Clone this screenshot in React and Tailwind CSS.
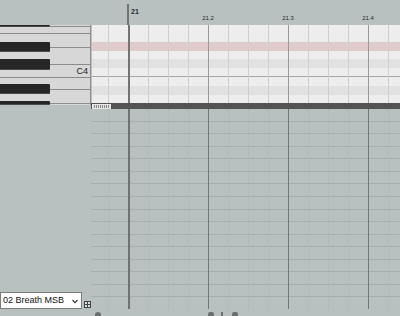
import React from "react";

function BlackRow({ h }) {
  return (
    <div className={`flex shrink-0 ${h}`}>
      <div className="w-[50px] bg-[#262626] border-b border-[#4a4a4a] rounded-r-[1px]" />
      <div className="flex-1 flex flex-col justify-center">
        <div className="h-px bg-[#8c8c8c]" />
      </div>
    </div>
  );
}

const gridCols = [
  "border-l border-[#cfcfcf]",
  "border-l-2 border-[#727474]",
  "border-l border-[#cfcfcf]",
  "border-l border-[#cfcfcf]",
  "border-l border-[#cfcfcf]",
  "border-l border-[#9a9a9a]",
  "border-l border-[#cfcfcf]",
  "border-l border-[#cfcfcf]",
  "border-l border-[#cfcfcf]",
  "border-l border-[#9a9a9a]",
  "border-l border-[#cfcfcf]",
  "border-l border-[#cfcfcf]",
  "border-l border-[#cfcfcf]",
  "border-l border-[#9a9a9a]",
  "border-l border-[#cfcfcf]",
];

const laneCols = [
  "border-l border-dotted border-[#adb5b5]",
  "border-l-2 border-[#6e7474]",
  "border-l border-dotted border-[#adb5b5]",
  "border-l border-dotted border-[#adb5b5]",
  "border-l border-dotted border-[#adb5b5]",
  "border-l border-[#737979]",
  "border-l border-dotted border-[#adb5b5]",
  "border-l border-dotted border-[#adb5b5]",
  "border-l border-dotted border-[#adb5b5]",
  "border-l border-[#737979]",
  "border-l border-dotted border-[#adb5b5]",
  "border-l border-dotted border-[#adb5b5]",
  "border-l border-dotted border-[#adb5b5]",
  "border-l border-[#737979]",
  "border-l border-dotted border-[#adb5b5]",
];

const noteRows = [
  "bg-[#ededed]",
  "bg-[#ededed]",
  "bg-[#dfcbcb]",
  "bg-[#ededed]",
  "bg-[#e1e1e1]",
  "bg-[#ededed] border-b border-[#a8a8a8]",
  "bg-[#ededed]",
  "bg-[#e1e1e1]",
  "bg-[#ededed]",
];

export default function App() {
  const laneRows = Array.from({ length: 16 }, (_, i) => i);
  return (
    <div className="w-[400px] h-[316px] bg-[#b9c1c0] flex flex-col overflow-hidden font-['Liberation_Sans',Arial,sans-serif] text-[#2a2a2a]">
      {/* ruler */}
      <div className="h-[25px] shrink-0 flex">
        <div className="w-[127px] shrink-0" />
        <div className="flex pt-[4px]">
          <div className="w-[81px] shrink-0 border-l-2 border-[#727474] pl-[2px]">
            <div className="text-[7px] font-bold leading-none mt-[4px]">21</div>
          </div>
          {["21.2", "21.3", "21.4"].map((t) => (
            <div key={t} className="w-[80px] shrink-0">
              <div className="w-0 flex justify-center mt-[11px]">
                <span className="whitespace-nowrap text-[6px] leading-none">{t}</span>
              </div>
            </div>
          ))}
        </div>
      </div>

      <div className="flex flex-1">
        {/* left column */}
        <div className="w-[91px] shrink-0 flex flex-col">
          <div className="h-[80px] bg-[#d7d7d7] border-r border-[#8f8f8f] flex flex-col">
            <BlackRow h="h-[2px]" />
            <div className="h-[6px]" />
            <div className="h-px bg-[#8c8c8c]" />
            <div className="h-[8px]" />
            <BlackRow h="h-[10px]" />
            <div className="h-[7px]" />
            <BlackRow h="h-[11px]" />
            <div className="h-[7px] flex justify-end pr-[2px]">
              <span className="text-[9px] leading-none -mt-[3px] text-[#222]">C4</span>
            </div>
            <div className="h-px bg-[#8c8c8c]" />
            <div className="h-[6px]" />
            <BlackRow h="h-[10px]" />
            <div className="h-[7px]" />
            <BlackRow h="h-[4px]" />
          </div>
          <div className="flex-1 flex flex-col justify-end pb-[7px]">
            <div className="flex items-end gap-[2px]">
              <div className="w-[82px] h-[17px] bg-white border border-[#7d7d7d] flex items-center justify-between pl-[2px] pr-[3px]">
                <span className="text-[9px] leading-none whitespace-nowrap text-[#111]">02 Breath MSB</span>
                <svg width="6" height="5" viewBox="0 0 6 5" className="mt-[1px]">
                  <path d="M0.5 1 L3 3.6 L5.5 1" fill="none" stroke="#333" strokeWidth="1.1" />
                </svg>
              </div>
              <svg width="7" height="7" viewBox="0 0 7 7" className="mb-[1px]">
                <rect x="0.5" y="0.5" width="6" height="6" fill="#dcdcdc" stroke="#444" />
                <path d="M3.5 1 V6 M1 3.5 H6" stroke="#444" strokeWidth="1" />
              </svg>
            </div>
          </div>
        </div>

        {/* right column */}
        <div className="w-[309px] shrink-0 flex flex-col">
          {/* note grid */}
          <div className="h-[78px] relative flex flex-col">
            {noteRows.map((c, i) => (
              <div key={i} className={`flex-1 ${c}`} />
            ))}
            <div className="absolute inset-0 flex">
              <div className="w-[17px] shrink-0 border-l border-[#bdbdbd]" />
              {gridCols.map((c, i) => (
                <div key={i} className={`w-[20px] shrink-0 ${c}`} />
              ))}
            </div>
          </div>
          {/* scrollbar */}
          <div className="h-[6px] bg-[#545454] flex items-center pl-[1px]">
            <div className="w-[19px] h-[5px] border border-[#e8e8e8] bg-[repeating-linear-gradient(90deg,#e2e2e2_0_1px,#8a8a8a_1px_2px)]" />
          </div>
          {/* controller lane */}
          <div className="h-[200px] relative flex flex-col">
            {laneRows.map((i) => (
              <div key={i} className={`flex-1 ${i < 15 ? "border-b border-[#a7afaf]" : ""}`} />
            ))}
            <div className="absolute inset-0 flex">
              <div className="w-[17px] shrink-0" />
              {laneCols.map((c, i) => (
                <div key={i} className={`w-[20px] shrink-0 ${c}`} />
              ))}
            </div>
          </div>
          {/* bottom scroll bits */}
          <div className="flex-1 flex items-end">
            <div className="w-[4px] shrink-0" />
            <div className="w-[6px] h-[4px] rounded-t-full bg-[#6b6f6f]" />
            <div className="w-[107px] shrink-0" />
            <div className="w-[6px] h-[4px] rounded-t-[2px] bg-[#6b6f6f]" />
            <div className="w-[7px] shrink-0" />
            <div className="w-[2px] h-[4px] bg-[#6b6f6f]" />
            <div className="w-[9px] shrink-0" />
            <div className="w-[6px] h-[4px] rounded-t-[2px] bg-[#6b6f6f]" />
          </div>
        </div>
      </div>
    </div>
  );
}
